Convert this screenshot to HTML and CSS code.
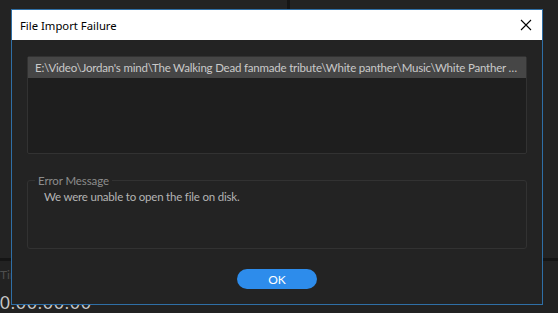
FILE: index.html
```html
<!DOCTYPE html>
<html lang="en">
<head>
    <meta charset="UTF-8">
    <title>File Import Failure</title>
    <link rel="stylesheet" href="styles.css">
</head>
<body>
    <div class="app">
        <div class="top-panels">
            <div class="panel"></div>
            <div class="panel"></div>
        </div>
        <div class="bottom-panel">
            <span class="panel-label">Timeline</span>
            <span class="timecode">0:00:00:00</span>
        </div>
    </div>

    <div class="dialog">
        <div class="title-bar">
            <span class="title">File Import Failure</span>
            <button class="close-btn" aria-label="Close">
                <svg width="12" height="12" viewBox="0 0 12 12">
                    <path d="M1 1 L11 11 M11 1 L1 11" stroke="#000" stroke-width="1.1" fill="none"/>
                </svg>
            </button>
        </div>
        <div class="dialog-body">
            <div class="file-list">
                <div class="file-row">E:\Video\Jordan's mind\The Walking Dead fanmade tribute\White panther\Music\White Panther edit.mp3</div>
            </div>
            <fieldset class="error-box">
                <legend>Error Message</legend>
                <p>We were unable to open the file on disk.</p>
            </fieldset>
            <div class="actions">
                <button class="ok-btn">OK</button>
            </div>
        </div>
    </div>
</body>
</html>
```

FILE: styles.css
```css
body {
    margin: 0;
    padding: 0;
    background-color: #1d1d1d;
    font-family: Lato, "Open Sans", sans-serif;
    width: 558px;
    height: 313px;
    overflow: hidden;
    position: relative;
}

.app {
    display: flex;
    flex-direction: column;
    height: 313px;
}

.top-panels {
    display: flex;
    gap: 3px;
    height: 270px;
    background-color: #151515;
}

.panel {
    flex: 1;
    background-color: #232323;
}

.panel:first-child {
    flex: 0 0 287px;
}

.bottom-panel {
    flex: 1;
    border-top: 3px solid #151515;
    background-color: #222;
    display: flex;
    flex-direction: column;
}

.panel-label {
    color: #4e4e4e;
    font-size: 12px;
    margin-top: 6px;
    line-height: 16px;
}

.timecode {
    color: #c8c8c8;
    font-size: 17px;
    letter-spacing: 1px;
    line-height: 20px;
    margin-top: 10px;
}

/* the dialog window sits over the app */
.dialog {
    position: absolute;
    z-index: 10;
    left: 11px;
    top: 9px;
    width: 530px;
    height: 294px;
    border: 1px solid #2f6fa6;
    background-color: #232323;
    display: flex;
    flex-direction: column;
}

.title-bar {
    height: 30px;
    background-color: #fff;
    display: flex;
    align-items: center;
    justify-content: space-between;
    padding-left: 8px;
}

.title {
    font-family: "Noto Sans", "Open Sans", sans-serif;
    font-size: 11.3px;
    color: #000;
}

.close-btn {
    width: 32px;
    height: 30px;
    border: none;
    background: transparent;
    display: flex;
    align-items: center;
    justify-content: center;
    padding: 0;
}

.dialog-body {
    flex: 1;
    padding: 16px 15px 0 15px;
    display: flex;
    flex-direction: column;
}

.file-list {
    height: 96px;
    border: 1px solid #323232;
    border-radius: 2px;
    background-color: #1e1e1e;
}

.file-row {
    height: 21px;
    line-height: 21px;
    background-color: #464646;
    color: #cacaca;
    font-size: 11.5px;
    letter-spacing: -0.2px;
    padding: 0 6px 0 7px;
    white-space: nowrap;
    overflow: hidden;
    text-overflow: ellipsis;
}

.error-box {
    margin: 20px 0 0 0;
    height: 73px;
    border: 1px solid #323232;
    border-radius: 3px;
    padding: 0 16px;
}

.error-box legend {
    color: #8c8c8c;
    font-size: 11.5px;
    letter-spacing: -0.1px;
    padding: 0 3px;
    margin-left: -9px;
}

.error-box p {
    margin: 3px 0 0 0;
    color: #b4b4b4;
    font-size: 11.5px;
    letter-spacing: -0.2px;
}

.actions {
    display: flex;
    justify-content: center;
    margin-top: 20px;
}

.ok-btn {
    width: 80px;
    height: 20px;
    border: none;
    border-radius: 10px;
    background-color: #2d8ceb;
    color: #fff;
    font-family: Lato, "Open Sans", sans-serif;
    font-size: 12px;
    padding: 0;
    cursor: pointer;
}
```
